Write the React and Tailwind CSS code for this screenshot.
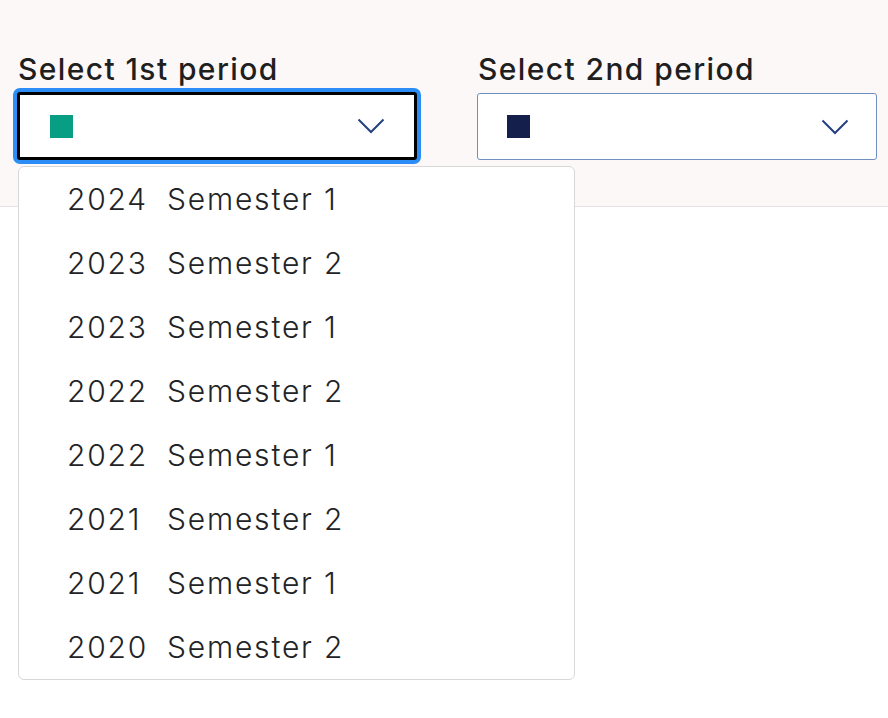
import React from 'react';

const periods = [
  ['2024', 'Semester 1'],
  ['2023', 'Semester 2'],
  ['2023', 'Semester 1'],
  ['2022', 'Semester 2'],
  ['2022', 'Semester 1'],
  ['2021', 'Semester 2'],
  ['2021', 'Semester 1'],
  ['2020', 'Semester 2'],
];

const Chevron = () => (
  <svg width="28" height="16" viewBox="0 0 28 16" fill="none" className="shrink-0">
    <polyline points="1.5,1.5 14,14 26.5,1.5" stroke="#24417f" strokeWidth="2" strokeLinejoin="miter" />
  </svg>
);

const App = () => {
  return (
    <div className="relative min-h-[718px] bg-white" style={{ fontFamily: 'Inter, "Noto Sans", sans-serif' }}>
      {/* Header band with the two pickers */}
      <div className="bg-[#fdf8f8] border-b border-[#e9dfe6] h-[207px] pt-[50px] pl-[17px]">
        <div className="flex gap-[60px]">
          <div className="w-[400px] shrink-0">
            <label className="block text-[30px] leading-[38px] font-medium tracking-[1.4px] text-[#1f1f1f] pl-[1px]">Select 1st period</label>
            <div className="mt-[4px] h-[68px] bg-white border-[3px] border-black rounded-[3px] shadow-[0_0_0_4px_#2b8df5] flex items-center pl-[30px] pr-[29px]">
              <span className="w-[23px] h-[23px] bg-[#079e84]" />
              <span className="flex-1" />
              <Chevron />
            </div>
          </div>
          <div className="w-[400px] shrink-0">
            <label className="block text-[30px] leading-[38px] font-medium tracking-[1.4px] text-[#1f1f1f] pl-[1px]">Select 2nd period</label>
            <div className="mt-[5px] h-[67px] bg-white border-[1.5px] border-[#6f8ec2] rounded-[3px] flex items-center pl-[29px] pr-[27px]">
              <span className="w-[23px] h-[23px] bg-[#141f4b]" />
              <span className="flex-1" />
              <Chevron />
            </div>
          </div>
        </div>
      </div>

      {/* Open dropdown list */}
      <div className="absolute left-[18px] top-[166px] w-[557px] bg-white border-[1.5px] border-[#d8d8d8] rounded-[6px]">
        {periods.map(([year, sem], i) => (
          <div key={i} className="h-[64px] flex items-center pl-[48px] text-[30px] font-light tracking-[1.8px] text-[#222326]">
            <span className="w-[100px]">{year}</span>
            <span>{sem}</span>
          </div>
        ))}
      </div>
    </div>
  );
};

export default App;
